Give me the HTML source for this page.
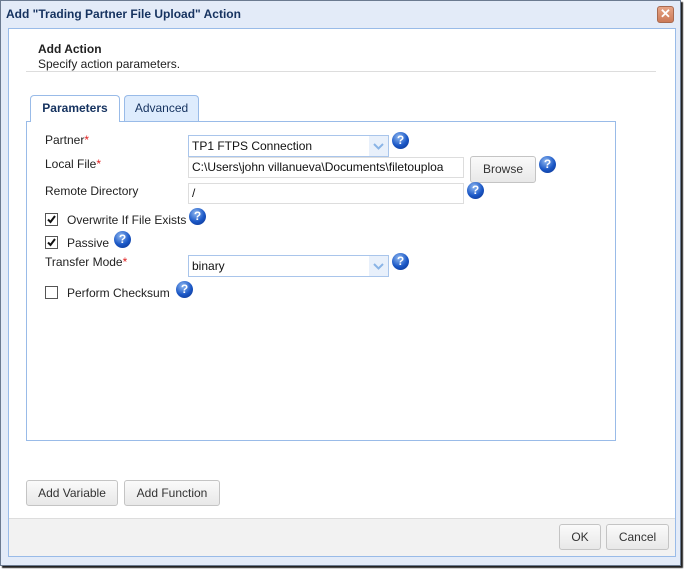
<!DOCTYPE html>
<html><head><style>
*{box-sizing:border-box;margin:0;padding:0}
body{width:684px;height:569px;background:#fff;font-family:"Liberation Sans",Arial,sans-serif;font-size:12px;color:#222;position:relative;overflow:hidden}
.a{position:absolute}
.win{left:0;top:0;width:681px;height:566px;background:#e3ebf8;border:1px solid #6b7a90;box-shadow:2px 2px 1px #222}
.title{left:6px;top:7px;font-weight:bold;font-size:12px;color:#15325f}
.inner{left:8px;top:28px;width:668px;height:529px;background:#fff;border:1px solid #99bbe8}
.foot{left:9px;top:518px;width:666px;height:38px;background:#f2f2f2;border-top:1px solid #ddd}
.btn{background:linear-gradient(#fafafa,#e8e8e8);border:1px solid #c4c4c4;border-radius:3px;text-align:center;color:#333;font-size:12px}
.help{width:17px;height:17px;border-radius:50%;background:radial-gradient(circle at 40% 30%,#8fb8f0,#1a57c6 55%,#0b2f86);color:#fff;font-weight:bold;font-size:12px;text-align:center;line-height:17px}
.inp{border:1px solid #ddd;background:#fff;height:21px;padding-left:3px;line-height:19px;font-size:12px;overflow:hidden;white-space:nowrap;color:#111}
.sel{border:1px solid #a9c5eb;background:#fff;height:22px;padding-left:3px;line-height:20px;font-size:12px;color:#111}
.sel .ar{position:absolute;right:0;top:0;width:19px;height:20px;background:#e8f0fb}
.lbl{font-size:12px;color:#222}
.req{color:#e02020}
.cb{width:13px;height:13px;border:1px solid #555;background:#fff}
</style></head><body>
<div class="a win"></div>
<div class="a title">Add "Trading Partner File Upload" Action</div>
<div class="a" style="left:657px;top:6px;width:17px;height:17px;background:linear-gradient(#e6a486,#cc7a58);border:1px solid #a86a50;border-radius:3px;color:#fff;font-weight:bold;font-size:13px;line-height:14px;text-align:center">✕</div>
<div class="a inner"></div>
<div class="a" style="left:38px;top:42px;font-weight:bold">Add Action</div>
<div class="a" style="left:38px;top:57px">Specify action parameters.</div>
<div class="a" style="left:26px;top:71px;width:630px;height:1px;background:#ddd"></div>
<div class="a" style="left:26px;top:121px;width:590px;height:320px;border:1px solid #99bbe8"></div>
<div class="a" style="left:30px;top:95px;width:90px;height:27px;background:#fff;border:1px solid #99bbe8;border-bottom:none;border-radius:4px 4px 0 0;font-weight:bold;color:#15325f;text-align:center;line-height:25px">Parameters</div>
<div class="a" style="left:124px;top:95px;width:75px;height:26px;background:#deecfd;border:1px solid #99bbe8;border-bottom:none;border-radius:4px 4px 0 0;color:#15325f;text-align:center;line-height:25px">Advanced</div>

<div class="a lbl" style="left:45px;top:133px">Partner<span class="req">*</span></div>
<div class="a sel" style="left:188px;top:135px;width:201px">TP1 FTPS Connection<div class="ar"><svg width="19" height="20"><path d="M5 8 L9.5 12.5 L14 8" fill="none" stroke="#8ab4e6" stroke-width="2"/></svg></div></div>
<div class="a help" style="left:392px;top:132px">?</div>

<div class="a lbl" style="left:45px;top:157px">Local File<span class="req">*</span></div>
<div class="a inp" style="left:188px;top:157px;width:276px">C:\Users\john villanueva\Documents\filetouploa</div>
<div class="a btn" style="left:470px;top:156px;width:66px;height:27px;line-height:25px">Browse</div>
<div class="a help" style="left:539px;top:156px">?</div>

<div class="a lbl" style="left:45px;top:184px">Remote Directory</div>
<div class="a inp" style="left:188px;top:183px;width:276px">/</div>
<div class="a help" style="left:467px;top:182px">?</div>

<div class="a cb" style="left:45px;top:213px"><svg width="11" height="11"><path d="M2 5.5 L4.5 8 L9 2" fill="none" stroke="#111" stroke-width="2"/></svg></div>
<div class="a lbl" style="left:67px;top:213px">Overwrite If File Exists</div>
<div class="a help" style="left:189px;top:208px">?</div>

<div class="a cb" style="left:45px;top:236px"><svg width="11" height="11"><path d="M2 5.5 L4.5 8 L9 2" fill="none" stroke="#111" stroke-width="2"/></svg></div>
<div class="a lbl" style="left:67px;top:236px">Passive</div>
<div class="a help" style="left:114px;top:231px">?</div>

<div class="a lbl" style="left:45px;top:255px">Transfer Mode<span class="req">*</span></div>
<div class="a sel" style="left:188px;top:255px;width:201px">binary<div class="ar"><svg width="19" height="20"><path d="M5 8 L9.5 12.5 L14 8" fill="none" stroke="#8ab4e6" stroke-width="2"/></svg></div></div>
<div class="a help" style="left:392px;top:253px">?</div>

<div class="a cb" style="left:45px;top:286px"></div>
<div class="a lbl" style="left:67px;top:286px">Perform Checksum</div>
<div class="a help" style="left:176px;top:281px">?</div>

<div class="a btn" style="left:26px;top:480px;width:92px;height:26px;line-height:24px">Add Variable</div>
<div class="a btn" style="left:124px;top:480px;width:96px;height:26px;line-height:24px">Add Function</div>

<div class="a foot"></div>
<div class="a btn" style="left:559px;top:524px;width:42px;height:26px;line-height:24px">OK</div>
<div class="a btn" style="left:606px;top:524px;width:63px;height:26px;line-height:24px">Cancel</div>
</body></html>
